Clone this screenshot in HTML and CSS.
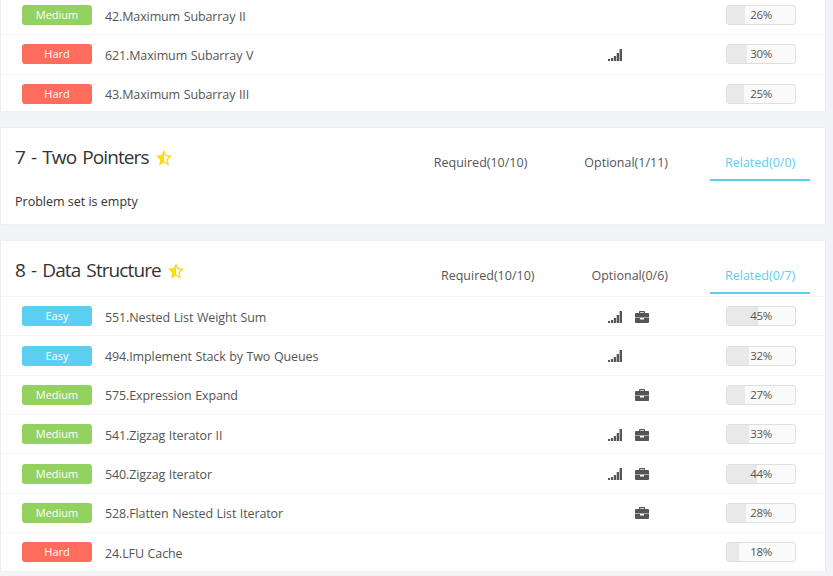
FILE: index.html
```
<!DOCTYPE html>
<html lang="en">
<head>
<meta charset="utf-8">
<title>Problem ladder</title>
<link rel="stylesheet" href="styles.css">
</head>
<body>
<svg class="defs" aria-hidden="true">
  <symbol id="star" viewBox="0 0 16 16"><path fill-rule="evenodd" d="M8 0l2.35 5.1 5.65.75-4.15 3.9 1.1 5.75L8 12.75 3.05 15.5l1.1-5.75L0 5.85l5.65-.75zM8 3.3v7.9l3.1 1.7-.75-3.7 2.65-2.4-3.6-.5z"/></symbol>
  <symbol id="signal" viewBox="0 0 14 12"><path d="M0 10h2v2H0zM2.9 9h2.2v3H2.9zM5.8 7h2.3v5H5.8zM8.7 4H11v8H8.7zM11.6 0H14v12h-2.4z"/></symbol>
  <symbol id="case" viewBox="0 0 14 12"><path fill-rule="evenodd" d="M4 2V1q0-1 1-1h4q1 0 1 1v1h3q1 0 1 1v3.6H0V3q0-1 1-1zm1.2 0h3.6v-.8H5.2zM0 7.1h5v1.3h4V7.1h5V11q0 1-1 1H1q-1 0-1-1z"/></symbol>
</svg>
<main class="page">
  <section class="card card-first">
    <div class="rows" id="subarray"></div>
  </section>
  <section class="card card-empty">
    <header class="head">
      <h2><span class="title">7 - Two Pointers</span><svg class="star"><use href="#star"/></svg></h2>
      <nav class="tabs"><span class="tab">Required(10/10)</span><span class="tab">Optional(1/11)</span><span class="tab active">Related(0/0)</span></nav>
    </header>
    <p class="empty">Problem set is empty</p>
  </section>
  <section class="card">
    <header class="head">
      <h2><span class="title">8 - Data Structure</span><svg class="star"><use href="#star"/></svg></h2>
      <nav class="tabs"><span class="tab">Required(10/10)</span><span class="tab">Optional(0/6)</span><span class="tab active">Related(0/7)</span></nav>
    </header>
    <div class="rows" id="structure"></div>
  </section>
</main>
<script src="script.js"></script>
</body>
</html>
```
FILE: styles.css
```
* { box-sizing: border-box; }
body {
  margin: 0;
  height: 576px;
  overflow: hidden;
  background: #f3f4f8;
  color: #555;
  font: 13px/20px "Open Sans", "Noto Sans", sans-serif;
}
.defs { display: none; }
.page { width: 826px; display: flex; flex-direction: column; gap: 15px; }
.card {
  background: #fff;
  border: 1px solid #ebecf0;
  border-top-color: #eeeff2;
  border-bottom-color: #f0f1f4;
}
.card-first { height: 112px; border-top: 0; display: flex; flex-direction: column; justify-content: flex-end; overflow: hidden; }
.card-first .rows { margin-bottom: -1.9px; }
.card-empty { height: 98px; }
.head { height: 55px; display: flex; justify-content: space-between; padding: 0 15px 0 14px; }
h2 { margin: 15px 0 0; height: 28px; display: flex; align-items: center; font-size: 19px; line-height: 28px; font-weight: 400; color: #333; }
.title { white-space: nowrap; letter-spacing: -.9px; word-spacing: 2px; }
.star { width: 16px; height: 16px; margin-left: 7px; margin-top: 2px; fill: #fadb14; }
.tabs { display: flex; gap: 27px; }
.tab { height: 53px; padding: 25px 15px 0; white-space: nowrap; font-size: 12.5px; }
.active { width: 100px; color: #5bcff2; border-bottom: 2px solid #5bcff2; }
.empty { margin: 9px 0 0 14px; color: #333; font-size: 12.5px; }
.row {
  height: 39.35px;
  border-top: 1px solid #f4f5f9;
  display: grid;
  grid-template-columns: 70px 516px 27px 91px 70px;
  padding-left: 21px;
  align-items: center;
}
.badge { height: 20px; border-radius: 3px; color: #fff; text-align: center; font-size: 11px; line-height: 19px; }
.easy { background: #5bcff2; }
.medium { background: #93d160; }
.hard { background: #ff6c5c; }
.name { padding-left: 13px; padding-top: 3px; white-space: nowrap; font-size: 12.5px; letter-spacing: -.12px; word-spacing: .5px; }
.icon { width: 14px; height: 12px; margin-top: 1px; fill: #555; }
.rate { position: relative; height: 20px; border: 1px solid #dfdfdf; border-radius: 3px; background: #fafafa; overflow: hidden; font-size: 11.5px; line-height: 18px; letter-spacing: -.35px; text-align: center; }
.fill { position: absolute; inset: 0 auto 0 0; background: #e9e9e9; }
.value { position: relative; }
```
FILE: script.js
```
const lists = {
  subarray: [
    ["Medium", "42.Maximum Subarray II", 26, ""],
    ["Hard", "621.Maximum Subarray V", 30, "s"],
    ["Hard", "43.Maximum Subarray III", 25, ""]
  ],
  structure: [
    ["Easy", "551.Nested List Weight Sum", 45, "sc"],
    ["Easy", "494.Implement Stack by Two Queues", 32, "s"],
    ["Medium", "575.Expression Expand", 27, "c"],
    ["Medium", "541.Zigzag Iterator II", 33, "sc"],
    ["Medium", "540.Zigzag Iterator", 44, "sc"],
    ["Medium", "528.Flatten Nested List Iterator", 28, "c"],
    ["Hard", "24.LFU Cache", 18, ""]
  ]
};
const icon = (on, id) => on ? `<svg class="icon"><use href="#${id}"/></svg>` : "<span></span>";
for (const [id, items] of Object.entries(lists)) {
  document.getElementById(id).innerHTML = items.map(([level, name, rate, tags]) => `
    <div class="row">
      <span class="badge ${level.toLowerCase()}">${level}</span>
      <span class="name">${name}</span>
      ${icon(tags.includes("s"), "signal")}
      ${icon(tags.includes("c"), "case")}
      <div class="rate"><div class="fill" style="width:${rate}%"></div><span class="value">${rate}%</span></div>
    </div>`).join("");
}
```
